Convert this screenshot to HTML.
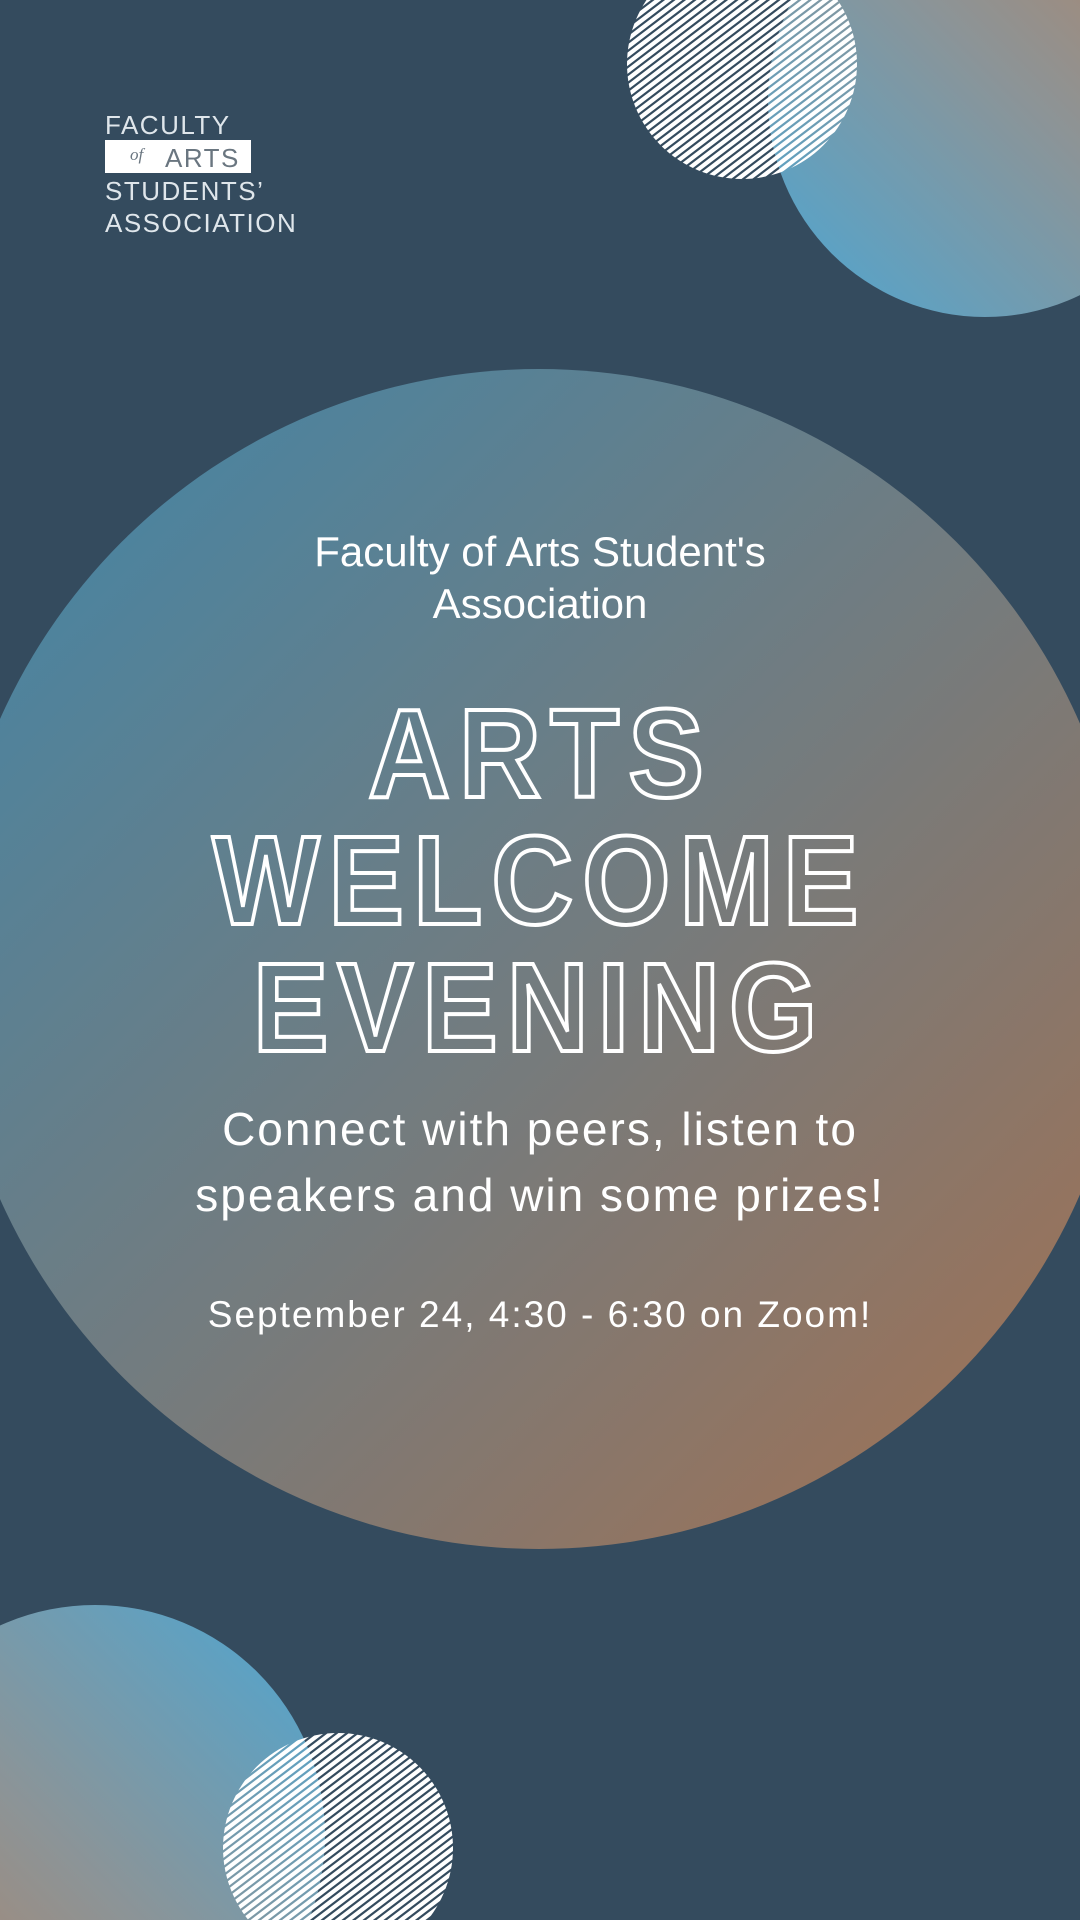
<!DOCTYPE html>
<html><head><meta charset="utf-8"><style>
html,body{margin:0;padding:0;width:1080px;height:1920px;overflow:hidden}
body{background:#344b5e;position:relative;font-family:"Liberation Sans","DejaVu Sans",sans-serif;color:#fff}
.abs{position:absolute}
.txt{position:absolute;left:0;width:1080px;text-align:center}
.title{position:absolute;left:0;width:1080px;text-align:center;font-weight:bold;font-size:126px;line-height:127px;color:transparent;-webkit-text-stroke:4px #fff;letter-spacing:10px}
.title span{display:inline-block;transform:scaleX(0.9);transform-origin:center}
.logo{position:absolute;left:105px;color:#dfe6eb;font-size:26px;letter-spacing:1.5px;line-height:26px}
</style></head><body>
<svg class="abs" style="left:0;top:0" width="1080" height="1920" viewBox="0 0 1080 1920">
<defs>
<linearGradient id="gm" x1="0" y1="0" x2="1" y2="1">
<stop offset="0" stop-color="#3f86a9"/><stop offset="0.5" stop-color="#727c80"/><stop offset="1" stop-color="#a5704f"/>
</linearGradient>
<linearGradient id="gt" x1="0" y1="1" x2="1" y2="0">
<stop offset="0.1" stop-color="#58a3c8"/><stop offset="0.55" stop-color="#8c9497"/><stop offset="1" stop-color="#b48261"/>
</linearGradient>
<linearGradient id="gb" x1="1" y1="0" x2="0" y2="1">
<stop offset="0.1" stop-color="#58a3c8"/><stop offset="0.55" stop-color="#8c9497"/><stop offset="1" stop-color="#b48261"/>
</linearGradient>
<clipPath id="c1"><circle cx="742" cy="64" r="115"/></clipPath>
<clipPath id="c2"><circle cx="338" cy="1848" r="115"/></clipPath>
<g id="lines" stroke="#fff" stroke-width="4.6">
<path d="M-200 200 L200 -200 M-190 200 L210 -200 M-180 200 L220 -200 M-170 200 L230 -200 M-160 200 L240 -200 M-150 200 L250 -200 M-140 200 L260 -200 M-130 200 L270 -200 M-120 200 L280 -200 M-110 200 L290 -200 M-100 200 L300 -200 M-90 200 L310 -200 M-80 200 L320 -200 M-70 200 L330 -200 M-60 200 L340 -200 M-50 200 L350 -200 M-40 200 L360 -200 M-30 200 L370 -200 M-20 200 L380 -200 M-10 200 L390 -200 M0 200 L400 -200 M10 200 L410 -200 M20 200 L420 -200 M30 200 L430 -200 M40 200 L440 -200 M50 200 L450 -200 M60 200 L460 -200 M70 200 L470 -200 M80 200 L480 -200 M90 200 L490 -200 M100 200 L500 -200 M110 200 L510 -200 M120 200 L520 -200 M130 200 L530 -200 M140 200 L540 -200 M150 200 L550 -200 M160 200 L560 -200 M170 200 L570 -200 M180 200 L580 -200 M190 200 L590 -200 M200 200 L600 -200"/>
</g>
</defs>
<circle cx="985" cy="100" r="217" fill="url(#gt)"/>
<g clip-path="url(#c1)"><use href="#lines" transform="translate(532 64) scale(1.05 0.8)"/></g>
<circle cx="539" cy="959" r="590" fill="url(#gm)"/>
<circle cx="95" cy="1835" r="230" fill="url(#gb)"/>
<g clip-path="url(#c2)"><use href="#lines" transform="translate(128 1848) scale(1.05 0.8)"/></g>
</svg>

<div class="logo" style="top:112px">FACULTY</div>
<div class="abs" style="left:105px;top:140px;width:146px;height:33px;background:#fff"></div>
<div class="abs" style="left:130px;top:145px;color:#6a7680;font-size:17px;font-style:italic;font-family:'Liberation Serif',serif">of</div>
<div class="abs" style="left:165px;top:143px;color:#6a7680;font-size:26px;letter-spacing:1.5px">ARTS</div>
<div class="logo" style="top:178px">STUDENTS’</div>
<div class="logo" style="top:210px">ASSOCIATION</div>

<div class="txt" style="top:526px;font-size:42px;line-height:52px">Faculty of Arts Student's<br>Association</div>

<div class="title" style="top:690px"><span>ARTS</span><br><span>WELCOME</span><br><span>EVENING</span></div>

<div class="txt" style="top:1096px;font-size:46px;line-height:66px;letter-spacing:2px">Connect with peers, listen to<br>speakers and win some prizes!</div>
<div class="txt" style="top:1293px;font-size:37px;line-height:44px;letter-spacing:2px">September 24, 4:30 - 6:30 on Zoom!</div>
</body></html>
